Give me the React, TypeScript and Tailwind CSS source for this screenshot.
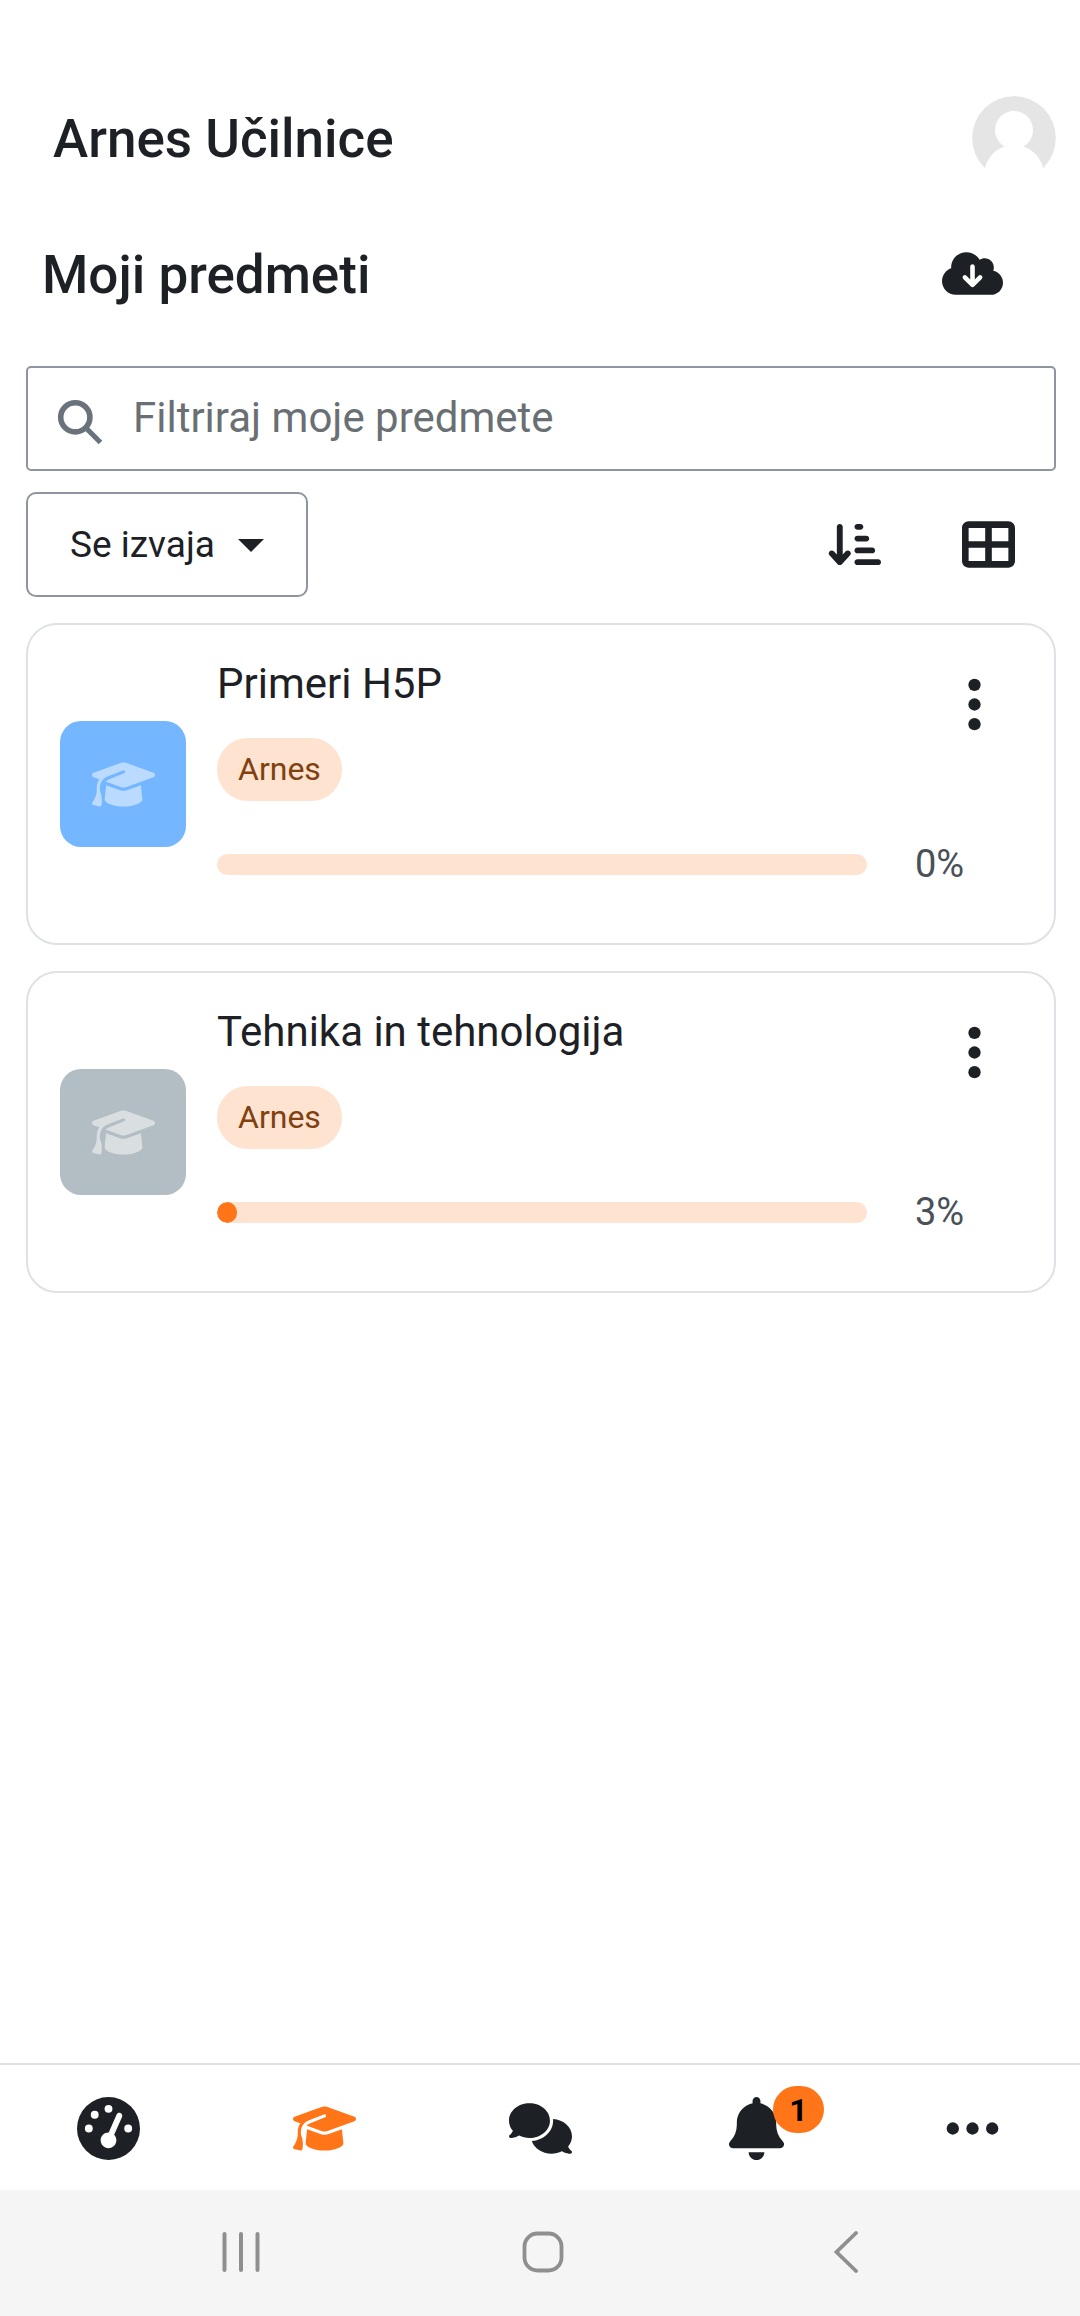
import { useState } from "react";
import type { ReactNode } from "react";
import {
  FaArrowDownShortWide,
  FaBell,
  FaCloudArrowDown,
  FaComments,
  FaGaugeHigh,
  FaGraduationCap,
  FaTableCellsLarge,
} from "react-icons/fa6";

const courses = [
  { id: 1, name: "Primeri H5P", category: "Arnes", progress: 0, color: "bg-[#74b6ff]" },
  { id: 2, name: "Tehnika in tehnologija", category: "Arnes", progress: 3, color: "bg-[#b2bec3]" },
];

function Dots({ vertical = false }: { vertical?: boolean }) {
  return (
    <svg viewBox="0 0 512 512" fill="currentColor" className="size-[63px]" aria-hidden="true">
      {[96, 256, 416].map((p) => (
        <circle key={p} cx={vertical ? 256 : p} cy={vertical ? p : 256} r="50" />
      ))}
    </svg>
  );
}

function Avatar() {
  return (
    <svg viewBox="0 0 84 84" className="size-[84px] rounded-full" aria-hidden="true">
      <circle cx="42" cy="42" r="42" fill="#e5e5e5" />
      <circle cx="42" cy="34" r="19" fill="#fff" />
      <circle cx="42" cy="79" r="30" fill="#fff" />
      <rect x="10" y="73" width="64" height="11" fill="#fff" />
    </svg>
  );
}

function SearchIcon() {
  return (
    <svg
      viewBox="0 0 50 50"
      fill="none"
      stroke="#6a737b"
      strokeWidth="5.6"
      className="mt-1 size-[50px] shrink-0"
      aria-hidden="true"
    >
      <circle cx="19.3" cy="21.3" r="14.6" />
      <path d="M29.5 31.500L44.500 46.500" strokeWidth="5.2" />
    </svg>
  );
}

function CourseCard({ course }: { course: (typeof courses)[number] }) {
  return (
    <li className="flex items-center gap-[31px] rounded-[31px] border-2 border-[#dee2e6] px-8">
      <div
        className={`flex size-[126px] shrink-0 items-center justify-center rounded-[21px] ${course.color}`}
      >
        <FaGraduationCap className="size-[63px] text-white/50" />
      </div>

      <div className="min-w-0 flex-1 pt-[34px] pb-[58px]">
        <div className="flex items-start justify-between">
          <div className="min-w-0">
            <h2 className="text-[42px] leading-[50px]">{course.name}</h2>
            <span className="mt-[29px] inline-flex h-[63px] items-center rounded-[31px] bg-[#fee3d1] px-[21px] pb-0.5 text-[32px] leading-9 text-[#80400f]">
              {course.category}
            </span>
          </div>
          <button
            type="button"
            aria-label="Možnosti predmeta"
            className="flex h-[90px] w-[95px] shrink-0 items-center justify-center"
          >
            <Dots vertical />
          </button>
        </div>

        <div className="mt-[42px] flex items-center gap-12">
          <div
            role="progressbar"
            aria-label={course.name}
            aria-valuenow={course.progress}
            aria-valuemin={0}
            aria-valuemax={100}
            className="h-[21px] flex-1 overflow-hidden rounded-full bg-[#fee3d1]"
          >
            <div
              className="h-full rounded-full bg-[#ff7518]"
              style={{ width: `${course.progress}%` }}
            />
          </div>
          <span className="w-[107px] text-[38px] leading-[42px] text-[#495057]">
            {course.progress}%
          </span>
        </div>
      </div>
    </li>
  );
}

function TabButton({
  label,
  active = false,
  badge,
  children,
}: {
  label: string;
  active?: boolean;
  badge?: number;
  children: ReactNode;
}) {
  return (
    <button
      type="button"
      aria-label={label}
      className={`flex h-[125px] items-center justify-center pt-0.5 pl-px ${active ? "text-[#ff7518]" : ""}`}
    >
      <span className="relative">
        {children}
        {badge !== undefined && (
          <span className="absolute -top-[11px] left-12 flex h-[47px] w-[51px] items-center justify-center rounded-full bg-[#ff7518] text-[32px] leading-9 font-bold text-black">
            {badge}
          </span>
        )}
      </span>
    </button>
  );
}

export default function App() {
  const [filter, setFilter] = useState("");
  const [status, setStatus] = useState("inprogress");

  const visible = courses.filter((c) => c.name.toLowerCase().includes(filter.toLowerCase()));

  return (
    <div className="flex min-h-screen flex-col bg-white font-['Roboto',sans-serif] text-[#1d2125]">
      {/* Header */}
      <header className="flex items-center justify-between pt-24 pr-6 pl-[53px]">
        <h1 className="pt-0.5 text-[53px] leading-[60px] font-medium">Arnes Učilnice</h1>
        <button type="button" aria-label="Uporabniški račun">
          <Avatar />
        </button>
      </header>

      <main className="flex-1 pr-6 pl-[26px]">
        <div className="mt-[51px] flex items-center justify-between pr-[42px] pl-4">
          <h2 className="pt-1 text-[53px] leading-[60px] font-medium">Moji predmeti</h2>
          <button
            type="button"
            aria-label="Prenesi predmete"
            className="flex size-[84px] items-center justify-center"
          >
            <FaCloudArrowDown className="size-[61px]" />
          </button>
        </div>

        {/* Filters */}
        <label className="mt-[51px] flex h-[105px] items-center rounded-[5px] border-2 border-[#8f959e] pl-7">
          <SearchIcon />
          <input
            type="text"
            aria-label="Filtriraj moje predmete"
            placeholder="Filtriraj moje predmete"
            value={filter}
            onChange={(e) => setFilter(e.target.value)}
            className="min-w-0 flex-1 bg-transparent pb-0.5 pl-[27px] text-[42px] leading-[50px] outline-none placeholder:text-[#6a6f74]"
          />
        </label>

        <div className="mt-[21px] flex items-center justify-between pr-[26px]">
          <div className="relative">
            <select
              aria-label="Stanje predmetov"
              value={status}
              onChange={(e) => setStatus(e.target.value)}
              className="h-[105px] w-[282px] appearance-none rounded-[10px] border-2 border-[#8f959e] bg-transparent pr-[70px] pl-[42px] text-[37px] leading-[42px]"
            >
              <option value="inprogress">Se izvaja</option>
            </select>
            <svg
              viewBox="0 0 26 13"
              className="pointer-events-none absolute top-[47px] right-11 h-[13px] w-[26px]"
              aria-hidden="true"
            >
              <path d="M0 0h26L13 13z" fill="currentColor" />
            </svg>
          </div>
          <div className="flex gap-[50px]">
            <button
              type="button"
              aria-label="Razvrsti"
              className="flex size-[84px] items-center justify-center"
            >
              <FaArrowDownShortWide className="size-[53px]" />
            </button>
            <button
              type="button"
              aria-label="Prikaz kartic"
              className="flex size-[84px] items-center justify-center"
            >
              <FaTableCellsLarge className="size-[53px]" />
            </button>
          </div>
        </div>

        {/* Courses */}
        <ul className="mt-[26px] space-y-[26px]">
          {visible.map((c) => (
            <CourseCard key={c.id} course={c} />
          ))}
        </ul>
      </main>

      {/* Tab bar */}
      <nav className="grid grid-cols-5 border-t-2 border-[#dee2e6]">
        <TabButton label="Nadzorna plošča">
          <FaGaugeHigh className="size-[63px]" />
        </TabButton>
        <TabButton label="Moji predmeti" active>
          <FaGraduationCap className="size-[63px]" />
        </TabButton>
        <TabButton label="Sporočila">
          <FaComments className="size-[63px]" />
        </TabButton>
        <TabButton label="Obvestila" badge={1}>
          <FaBell className="size-[63px]" />
        </TabButton>
        <TabButton label="Več">
          <Dots />
        </TabButton>
      </nav>

      {/* Android system navigation */}
      <div className="grid h-[126px] grid-cols-3 items-center justify-items-center bg-[#f5f5f5] pr-[84px] pb-0.5 pl-[90px] text-[#8f8f8f]">
        <button type="button" aria-label="Nedavne aplikacije">
          <svg viewBox="0 0 42 42" className="size-[42px]" stroke="currentColor" strokeWidth="4" strokeLinecap="round">
            <path d="M4.500 3v36M21 3v36M37.500 3v36" />
          </svg>
        </button>
        <button type="button" aria-label="Domov">
          <svg viewBox="0 0 42 42" className="size-[42px]" fill="none" stroke="currentColor" strokeWidth="3.8">
            <rect x="2.500" y="2.500" width="37" height="37" rx="13" />
          </svg>
        </button>
        <button type="button" aria-label="Nazaj">
          <svg viewBox="0 0 42 42" className="size-[42px]" fill="none" stroke="currentColor" strokeWidth="3.8" strokeLinecap="round">
            <path d="M32 2L12.500 21L32 40" />
          </svg>
        </button>
      </div>
    </div>
  );
}
